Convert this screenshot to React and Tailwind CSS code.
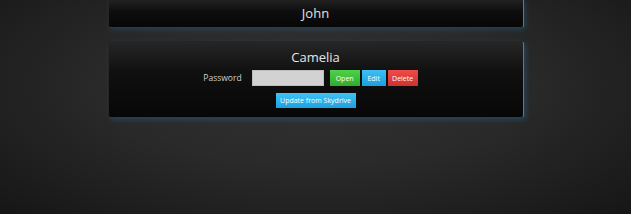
export default function App() {
  return (
    <div className="w-[631px] h-[214px] overflow-hidden bg-[radial-gradient(ellipse_at_50%_40%,#323232_0%,#2a2a2a_45%,#161616_100%)] font-['Open_Sans',sans-serif]">
      <div className="w-[416px] mx-auto -mt-[2px] flex flex-col gap-[13px]">
        <div className="h-[30px] rounded-[3px] border border-[#262626] border-r-[#3b86a8] border-b-[#1d3f52] bg-[linear-gradient(to_bottom,#232323_0%,#0e0e0e_45%,#070707_100%)] shadow-[2px_2px_5px_rgba(40,130,190,0.25)] flex items-center justify-center">
          <span className="text-[13px] text-[#e2e2e2] leading-none">John</span>
        </div>
        <div className="h-[77px] rounded-[3px] border border-[#262626] border-r-[#3b86a8] border-b-[#1d3f52] bg-[linear-gradient(to_bottom,#262626_0%,#101010_40%,#070707_100%)] shadow-[2px_2px_5px_rgba(40,130,190,0.3)] flex flex-col items-center pt-[6px]">
          <div className="text-[13px] text-[#e6e6e6] leading-[18px]">Camelia</div>
          <div className="flex items-center mt-[4px] ml-[-10px]">
            <span className="text-[8.5px] text-[#cfcfcf] mr-[10px]">Password</span>
            <input className="w-[72px] h-[16px] bg-[#d2d2d2] border border-[#bdbdbd] outline-none" />
            <button className="ml-[6px] w-[30px] h-[16px] bg-[linear-gradient(to_bottom,#4fd14a,#2fae2c)] text-white text-[7px] leading-none">Open</button>
            <button className="ml-[2px] w-[24px] h-[16px] bg-[linear-gradient(to_bottom,#3fbff2,#1a9fe0)] text-white text-[7px] leading-none">Edit</button>
            <button className="ml-[2px] w-[30px] h-[16px] bg-[linear-gradient(to_bottom,#ee4b4b,#d22f2f)] text-white text-[7px] leading-none">Delete</button>
          </div>
          <button className="mt-[7px] w-[80px] h-[15px] bg-[linear-gradient(to_bottom,#40c2f4,#1ca2e2)] text-white text-[7px] leading-none">Update from Skydrive</button>
        </div>
      </div>
    </div>
  );
}
